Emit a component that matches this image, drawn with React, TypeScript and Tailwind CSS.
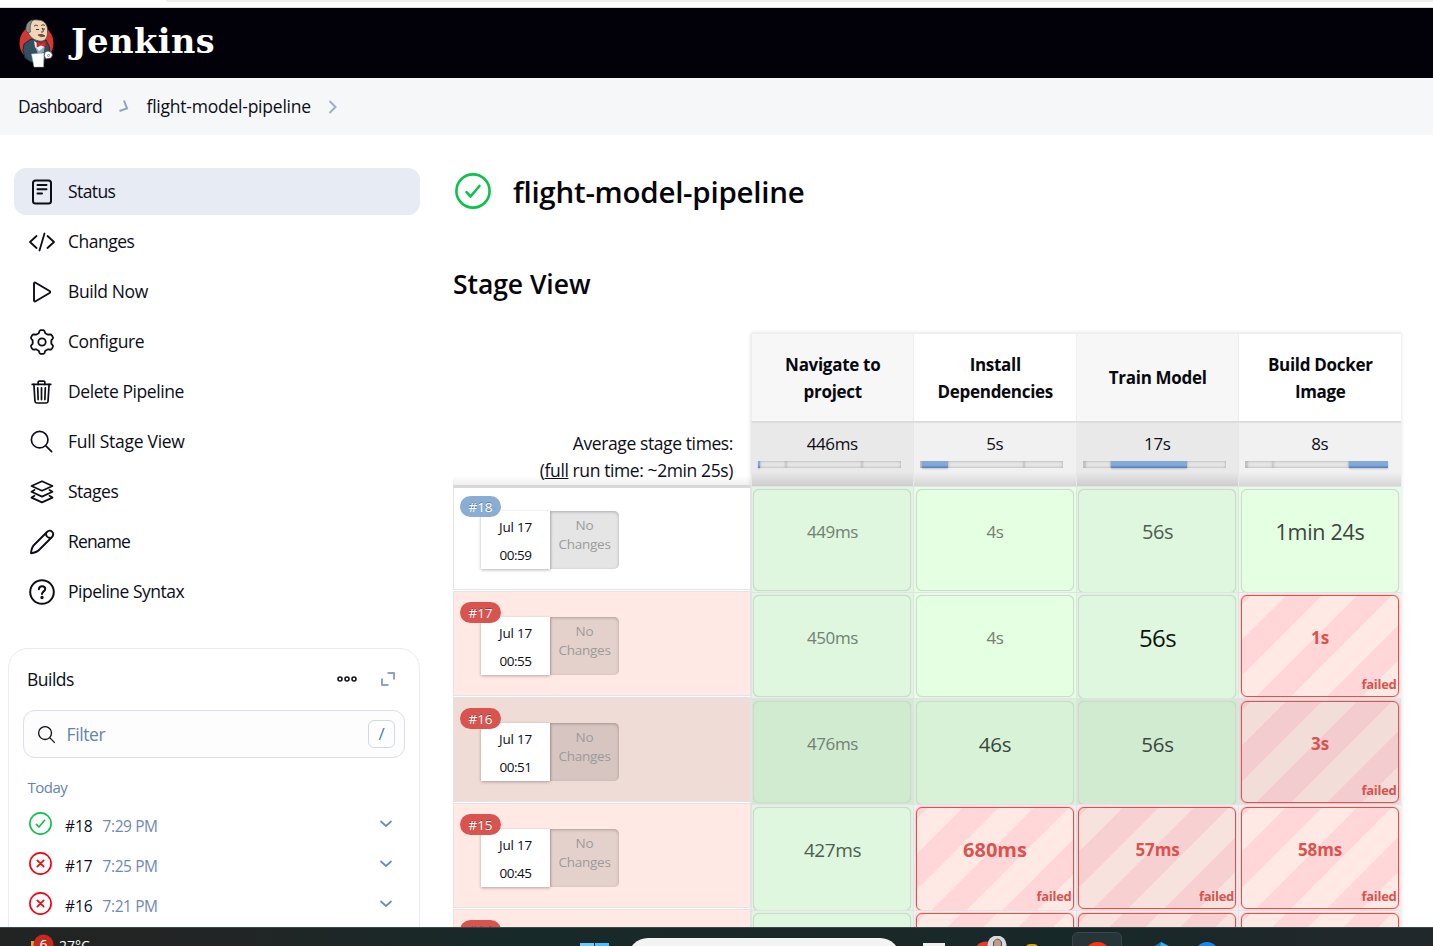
import type { ReactNode } from "react";
import { IoSearchOutline, IoTrashOutline } from "react-icons/io5";

function JenkinsLogo() {
  return (
    <svg width="38" height="52" viewBox="0 0 38 52">
      <ellipse cx="18.500" cy="26" rx="17" ry="18" fill="#d33833" />
      <path d="M6 27 L13 22 L28 23 L31 29 L32 36 L27 39 L26 44 L13 45 L7 41 L5 33 Z" fill="#335061" stroke="#1b2a33" strokeWidth="1" />
      <path d="M16 24 L21 27 L27 25 L26 33 L21 36 L17 30 Z" fill="#eef0f1" />
      <path d="M17 29 L21 34 L26 30 L26 35 L20 37 Z" fill="#81b0c4" />
      <path d="M9 13 C8 5 14 2 20 3 C27 3 30 9 29.500 14 C30 21 27 25 21 24 C15 23 11 19 9 13 Z" fill="#f0d6b7" stroke="#4d4d4d" strokeWidth="0.8" />
      <path d="M8 14 C7 7 11 3 15 3 C12 7 12 10 12.500 15 L10 16 Z" fill="#8c8c90" stroke="#333" strokeWidth="0.6" />
      <path d="M16 9 q2 -2 4 0 M23 8.500 q2 -1.500 4 0 M24 11 q2 2 1 4 l-2 0" stroke="#4a3529" fill="none" strokeWidth="0.9" />
      <path d="M18 12.500 h3 M24 12 h3" stroke="#222" strokeWidth="0.900" />
      <path d="M20 18 q4 -2 7 1 q-4 2 -7 -1" fill="#7c4a3d" stroke="#573d35" strokeWidth="0.7" />
      <path d="M19 24 L23 26.500 L28 24 L28 30 L23 28 L19 30 Z" fill="#e5242c" stroke="#8f1518" strokeWidth="0.6" />
      <path d="M13.500 37 L26 36 L25.500 50 L16 50 Z" fill="#fff" stroke="#aaa" strokeWidth="0.5" />
      <path d="M27 35 q3 -2 6 0 q3 3 0 6 l-5 1 q-3 -3 -1 -7 Z" fill="#fff" stroke="#333" strokeWidth="0.7" />
      <circle cx="30.500" cy="38.500" r="1" fill="none" stroke="#555" strokeWidth="0.6" />
    </svg>
  );
}

function Line({ children, size = 26, width = 2 }: { children: ReactNode; size?: number; width?: number }) {
  return (
    <svg
      width={size}
      height={size}
      viewBox="0 0 26 26"
      fill="none"
      stroke="currentColor"
      strokeWidth={width}
      strokeLinecap="round"
      strokeLinejoin="round"
    >
      {children}
    </svg>
  );
}

// Six-lobed gear outline, one lobe pointing straight up.
const gearPoints = Array.from({ length: 120 }, (_, i) => {
  const a = (i / 120) * Math.PI * 2;
  const r = 10.6 + 1.3 * Math.tanh(2.4 * Math.cos(6 * a));
  return `${(13 + r * Math.sin(a)).toFixed(2)},${(13 - r * Math.cos(a)).toFixed(2)}`;
}).join(" ");

const nav: { label: string; icon: ReactNode; track: string }[] = [
  {
    label: "Status",
    track: "tracking-[-0.6px]",
    icon: (
      <Line>
        <rect x="4" y="1.500" width="18" height="23" rx="2.500" />
        <path d="M8.500 6h9M8.500 10.300h9M8.500 14.500h4.500" />
      </Line>
    ),
  },
  {
    label: "Changes",
    track: "tracking-[-0.5px]",
    icon: (
      <Line width={1.8}>
        <path d="M7.500 7 1 13l6.500 6M18.500 7l6.500 6-6.500 6M15.500 4.500l-5 17" />
      </Line>
    ),
  },
  {
    label: "Build Now",
    track: "tracking-[-0.4px]",
    icon: (
      <Line width={1.9}>
        <path d="M5 4.600v16.800c0 .9.900 1.300 1.600.9l14-8.300c.8-.5.800-1.500 0-2L6.600 3.700C5.900 3.300 5 3.700 5 4.600z" />
      </Line>
    ),
  },
  {
    label: "Configure",
    track: "tracking-[-0.4px]",
    icon: (
      <Line width={1.8}>
        <polygon points={gearPoints} />
        <circle cx="13" cy="13" r="3.700" />
      </Line>
    ),
  },
  { label: "Delete Pipeline", track: "tracking-[-0.42px]", icon: <IoTrashOutline size={28} /> },
  { label: "Full Stage View", track: "tracking-[-0.28px]", icon: <IoSearchOutline size={29} /> },
  {
    label: "Stages",
    track: "tracking-[-0.5px]",
    icon: (
      <Line width={1.8}>
        <path d="M13 2.200 23.500 7 13 11.800 2.500 7z" />
        <path d="M5.500 11 2.500 12.800 13 17.600l10.500-4.800L20.500 11" />
        <path d="M5.500 16.800 2.500 18.600 13 23.400l10.500-4.800-3-1.800" />
      </Line>
    ),
  },
  {
    label: "Rename",
    track: "tracking-[-0.85px]",
    icon: (
      <Line width={1.9}>
        <path d="M2 24.200 C2.400 20 3.200 17.800 5 16 L18 3 C19.500 1.500 21.800 1.400 23.200 2.800 C24.600 4.200 24.500 6.500 23 8 L10 21 C8.200 22.800 6 23.600 2 24.200Z M17 4.500 C17 7 19 9 21.500 9" />
      </Line>
    ),
  },
  {
    label: "Pipeline Syntax",
    track: "tracking-[-0.5px]",
    icon: (
      <Line>
        <circle cx="13" cy="13" r="11.800" />
        <path d="M9.900 10.200c.1-2 1.500-3 3.200-3 1.800 0 3.100 1.100 3.100 2.700 0 2.400-3.200 2.500-3.200 5" />
        <circle cx="13" cy="18.500" r="0.700" fill="currentColor" />
      </Line>
    ),
  },
];

function StatusRing({ ok, size }: { ok: boolean; size: number }) {
  return (
    <svg width={size} height={size} viewBox="0 0 36 36" fill="none" stroke={ok ? "#0bc34a" : "#f6000f"} strokeWidth="2.600" strokeLinecap="round" strokeLinejoin="round">
      <circle cx="18" cy="18" r="16.600" />
      {ok ? <path d="M11.500 19.200l4 4.300 9-10.500" /> : <path d="M13 13l10 10M23 13L13 23" />}
    </svg>
  );
}

function Sidebar() {
  return (
    <aside className="w-[433px] shrink-0 pl-2 pt-[33px]">
      <nav className="flex w-[412px] flex-col gap-[3px] pl-1.5">
        {nav.map((n, i) => (
          <a
            key={n.label}
            className={`flex h-[47px] items-center rounded-[12px] pl-[14px] text-[17.500px] ${i === 0 ? "bg-[#e7ebf3]" : ""}`}
          >
            <span className="flex w-[27px] justify-center">{n.icon}</span>
            <span className={`ml-[13px] ${n.track}`}>{n.label}</span>
          </a>
        ))}
      </nav>
      <section className="mt-[33px] h-[320px] w-[412px] rounded-[20px] border border-[#eaecf3] px-[14px]">
        <div className="flex h-[61px] items-center pl-[4px] pr-[9px]">
          <h2 className="flex-1 text-[17.500px] tracking-[-0.5px]">Builds</h2>
          <svg className="-mt-[2px]" width="22" height="8" viewBox="0 0 22 8" fill="none" stroke="#14141f" strokeWidth="1.600">
            <circle cx="4" cy="4" r="2" />
            <circle cx="11" cy="4" r="2" />
            <circle cx="18" cy="4" r="2" />
          </svg>
          <svg className="-mt-[2px] ml-[22px]" width="16" height="16" viewBox="0 0 16 16" fill="none" stroke="#8ba3c7" strokeWidth="2" strokeLinejoin="round">
            <path d="M7.500 2H14v6.500M2 7.500V14h6.500" />
          </svg>
        </div>
        <div className="flex h-12 items-center rounded-[12px] border-[1.500px] border-[#d9dfeb] bg-[#fdfdfe] pl-3 pr-[9px]">
          <IoSearchOutline size={21} />
          <span className="ml-[9.500px] flex-1 text-[17.500px] tracking-[-0.400px] text-[#6483ae]">Filter</span>
          <kbd className="flex h-7 w-[27px] items-center justify-center rounded-[6px] border border-[#d0d9e8] font-['Open_Sans',sans-serif] text-[17px] text-[#5478a8]">/</kbd>
        </div>
        <p className="mt-[18px] pl-[4.500px] text-[15px] leading-[22px] tracking-[-0.500px] text-[#6483ae]">Today</p>
        {[
          ["#18", "7:29 PM"],
          ["#17", "7:25 PM"],
          ["#16", "7:21 PM"],
        ].map(([id, time], i) => (
          <div key={id} className={`flex h-10 items-center pl-[6px] pr-[12px] text-[15.500px] ${i === 0 ? "mt-[5px]" : ""}`}>
            <StatusRing ok={i === 0} size={23} />
            <span className="ml-[13px] mt-[7px] w-[37.500px] tracking-[-0.100px]">{id}</span>
            <span className="mt-[7px] flex-1 tracking-[-0.400px] text-[#7089b2]">{time}</span>
            <svg className="mt-px" width="14" height="8" viewBox="0 0 14 8" fill="none" stroke="#6b8ab8" strokeWidth="1.700" strokeLinecap="round" strokeLinejoin="round">
              <path d="M2 1.500l5 4.500 5-4.500" />
            </svg>
          </div>
        ))}
      </section>
    </aside>
  );
}

const segments = ["w-[2px]", "w-[26px]", "w-[76px]", "w-[39px]"];

const stages = [
  { name: "Navigate to project", avg: "446ms" },
  { name: "Install Dependencies", avg: "5s" },
  { name: "Train Model", avg: "17s" },
  { name: "Build Docker Image", avg: "8s" },
];

type Cell = { t: string; failed?: boolean; tone?: string; tall?: boolean };

const dim = "text-[17px] tracking-[-0.400px] text-[#738073]";
const mid = "text-[19px] tracking-[-0.400px] text-[#4f5d51]";
const big = "text-[21.500px] tracking-[-0.300px] text-[#3b463d]";
const red = "text-[17px] font-bold tracking-[-0.200px] text-[#d9534f]";

const runs: { id: string; time: string; cells: Cell[] }[] = [
  {
    id: "#18",
    time: "00:59",
    cells: [
      { t: "449ms", tone: dim },
      { t: "4s", tone: dim },
      { t: "56s", tone: "text-[20px] tracking-[-0.400px] text-[#4f5d51]", tall: true },
      { t: "1min 24s", tone: big, tall: true },
    ],
  },
  {
    id: "#17",
    time: "00:55",
    cells: [
      { t: "450ms", tone: dim },
      { t: "4s", tone: dim },
      { t: "56s", tone: "text-[24px] tracking-[-0.600px] text-[#0c120d]", tall: true },
      { t: "1s", failed: true },
    ],
  },
  {
    id: "#16",
    time: "00:51",
    cells: [
      { t: "476ms", tone: dim },
      { t: "46s", tone: "text-[20.500px] tracking-[-0.300px] text-[#3b463d]", tall: true },
      { t: "56s", tone: "text-[20.500px] tracking-[-0.300px] text-[#3b463d]", tall: true },
      { t: "3s", failed: true },
    ],
  },
  {
    id: "#15",
    time: "00:45",
    cells: [
      { t: "427ms", tone: mid, tall: true },
      { t: "680ms", failed: true, tone: "text-[20px] font-bold tracking-[0px] text-[#d9534f]", tall: true },
      { t: "57ms", failed: true },
      { t: "58ms", failed: true },
    ],
  },
];

function RunInfo({ id, time, index }: { id: string; time?: string; index: number }) {
  const bg = index === 0 ? "bg-white" : index === 2 ? "bg-[#f0dcd7]" : "bg-[#ffe9e4]";
  return (
    <div className={time ? "h-[106px] pb-px" : "h-[18px] overflow-hidden"}>
      <div
        className={`relative h-[105px] border border-[#e4e2e4] pl-[27px] ${bg} ${
          index === 0 ? "border-t-[3px] border-t-[#d8d8d8] pt-[23px]" : "pt-[25px]"
        }`}
      >
        <span
          className={`absolute left-[6px] flex h-[21px] w-[41px] items-center justify-center rounded-full pt-px text-[13.500px] tracking-[-0.100px] text-white [text-shadow:0_-1px_0_rgba(0,0,0,.3)] ${
            index === 0 ? "top-[8px] bg-[#8aadd4]" : "top-[10px] bg-[#d9534f]"
          }`}
        >
          {id}
        </span>
        {time && (
          <div className="flex h-[58px] text-center text-[13.500px]">
            <div className="w-[69px] bg-white pt-[2px] leading-[28px] tracking-[-0.200px] shadow-[0_1px_3px_rgba(0,0,0,.3)]">
              <div>Jul 17</div>
              <div className="tracking-[-0.500px]">{time}</div>
            </div>
            <div className="w-[69px] rounded-r-[5px] bg-black/10 pt-[5px] text-[13.500px] leading-[19px] tracking-[-0.250px] text-[#9b9b9b] shadow-[inset_0_1px_3px_rgba(0,0,0,.25)]">
              No
              <br />
              Changes
            </div>
          </div>
        )}
      </div>
    </div>
  );
}

function StageCell({ cell, dark, odd }: { cell: Cell; dark: boolean; odd: boolean }) {
  const green = dark ? (odd ? "bg-[#d1ebd1]" : "bg-[#d8f2d8]") : odd ? "bg-[#def7de]" : "bg-[#e4ffe2]";
  const stripes = dark
    ? "bg-[repeating-linear-gradient(-45deg,#f2ddd9_0_25px,#f3cccf_25px_50px)]"
    : odd
      ? "bg-[repeating-linear-gradient(-45deg,#f8e2dd_0_25px,#f7d0d2_25px_50px)]"
      : "bg-[repeating-linear-gradient(-45deg,#ffe9e4_0_25px,#ffd7d9_25px_50px)]";
  const outer = cell.failed ? (dark ? "bg-[#eadfdf]" : "bg-[#f6eeee]") : green;
  return (
    <div className={`h-[106px] border-l border-t border-[#e3e1e5] pl-[1.500px] pr-[2px] pt-[2px] ${outer}`}>
      <div
        className={`flex w-[158px] flex-col rounded-[6px] border text-center ${cell.tall ? "h-[103.500px]" : "h-[102px]"} ${
          cell.failed
            ? `border-[1.500px] border-[#d9534f] shadow-[0_0_2px_rgba(217,83,79,.6)] ${stripes}`
            : `border-[#cfd8d1] shadow-[0_0_1px_rgba(0,0,0,.15)] ${green}`
        }`}
      >
        <div className={`mt-[28px] pl-px leading-[28px] ${cell.tone ?? red}`}>{cell.t}</div>
        {cell.failed && cell.t && (
          <div className={`mt-auto pr-[1px] text-right text-[13px] font-bold leading-[18px] tracking-[-0.300px] text-[#d9534f] ${cell.tall ? "pb-[5px]" : "pb-[3px]"}`}>
            failed
          </div>
        )}
      </div>
    </div>
  );
}

const clipped: Cell[] = [{ t: "" }, { t: "", failed: true }, { t: "", failed: true }, { t: "", failed: true }];

function StageBoard() {
  return (
    <div className="mt-[33px] flex">
      <div className="w-[297.500px]">
        <div className="flex h-[152px] flex-col justify-end bg-linear-to-t from-[#efefef] to-white to-[9px] pb-px pr-[17.500px] text-right text-[17.500px] leading-[27px] tracking-[-0.400px]">
          <div>Average stage times:</div>
          <div>
            (<span className="underline">full</span> run time: ~2min 25s)
          </div>
        </div>
        {runs.map((r, i) => (
          <RunInfo key={r.id} id={r.id} time={r.time} index={i} />
        ))}
        <RunInfo id="#14" index={4} />
      </div>
      <div className="w-[650px] border-r border-[#ececf0] shadow-[0_0_4px_rgba(0,0,0,.14)]">
        <div className="grid w-[650px] grid-cols-4">
          {stages.map((s, c) => (
            <div
              key={s.name}
              className={`flex h-[88px] items-center justify-center border-l border-t border-[#eeeeef] pl-[19.500px] pr-[18.500px] text-center text-[17px] font-bold leading-[27px] tracking-[-0.300px] text-[#08080f] ${c % 2 ? "bg-white" : "bg-[#f7f7f7]"}`}
            >
              {s.name}
            </div>
          ))}
          {stages.map((s, c) => (
            <div
              key={s.avg}
              className={`h-[65px] border-l border-t-2 border-l-[#e8e8ea] border-t-[#dddddd] pl-[6px] ${
                c % 2
                  ? "bg-linear-to-t from-[#d5d5d5] via-[#f1f1f1] via-[14px] to-[#f1f1f1]"
                  : "bg-linear-to-t from-[#cdcdcd] via-[#e9e9e9] via-[14px] to-[#e9e9e9]"
              }`}
            >
              <div className="pr-[6px] pt-[7px] text-center text-[17px] leading-7 tracking-[-0.400px]">{s.avg}</div>
              <div className="mt-[3px] flex h-[7px] w-[143px]">
                {segments.map((w, k) => (
                  <span
                    key={w}
                    className={`${w} ${
                      k === c
                        ? "bg-linear-to-b from-[#84aad3] from-60% to-[#4a7bd0] shadow-[0_1px_2px_rgba(0,0,0,.2)]"
                        : "bg-[#e6e6e6] shadow-[inset_0_0_3px_rgba(0,0,0,.3)]"
                    }`}
                  />
                ))}
              </div>
            </div>
          ))}
          {runs.map((r, i) =>
            r.cells.map((cell, c) => <StageCell key={`${r.id}-${c}`} cell={cell} dark={i === 2} odd={c % 2 === 0} />),
          )}
          {clipped.map((cell, c) => (
            <StageCell key={c} cell={cell} dark={false} odd={c % 2 === 0} />
          ))}
        </div>
      </div>
    </div>
  );
}

function Taskbar() {
  return (
    <footer className="flex h-[19px] shrink-0 items-start overflow-hidden border-t border-[#3c4747] bg-[linear-gradient(90deg,#222423_0%,#222525_16%,#172929_35%,#1c2828_55%,#172828_75%,#21282b_95%)] text-white">
      <svg className="ml-[30px] mt-[6px] shrink-0" width="24" height="20" viewBox="0 0 24 20">
        <rect x="1" y="7" width="5" height="12" fill="#e0a63a" />
        <circle cx="13.500" cy="10.500" r="10" fill="#c42b1f" />
        <text x="13.500" y="15.500" fontSize="14" textAnchor="middle" fill="#fff" fontFamily="Open Sans">6</text>
      </svg>
      <span className="ml-[5px] mt-[7px] w-[33px] text-[14px] leading-[22px] tracking-[0px]">27°C</span>
      <svg className="ml-[488px] mt-[15px] shrink-0" width="29" height="5">
        <rect width="14" height="5" fill="#6cccf7" />
        <rect x="15" width="14" height="5" fill="#46c3f8" />
      </svg>
      <div className="ml-[19px] mt-[10px] h-10 w-[272px] shrink-0 rounded-[20px] bg-[#f2f3f3]" />
      <div className="ml-[23px] mt-[15px] h-5 w-[22px] shrink-0 bg-[#eef0f0]" />
      <svg className="ml-[28px] mt-[8px] shrink-0" width="36" height="12" viewBox="0 0 36 12">
        <circle cx="13" cy="18" r="12.500" fill="#df3d30" />
        <circle cx="24" cy="9" r="9.500" fill="#d5dbdc" />
        <path d="M20 12V6q5-7 9 0v6z" fill="#4e555d" />
        <ellipse cx="24.500" cy="8" rx="3.500" ry="4.500" fill="#c39a88" />
      </svg>
      <div className="ml-[17px] mt-[16px] h-5 w-[12px] shrink-0 rounded-t-sm bg-[#d9a20b]" />
      <div className="ml-[34px] mt-[4px] flex h-10 w-[50px] shrink-0 justify-center rounded-md border border-[#37474a] bg-[#263638] pt-[9px]">
        <div className="h-6 w-[25px] rounded-full bg-[#fb3417]" />
      </div>
      <svg className="ml-[31px] mt-[14px] shrink-0" width="16" height="5" viewBox="0 0 16 5">
        <path d="M0 5 8 0l3 2v3z" fill="#1678b8" />
        <path d="M8 0l8 4v1H7z" fill="#31b1f0" />
      </svg>
      <div className="ml-[26px] mt-[14px] size-6 shrink-0 rounded-full bg-[#1c85e8]" />
    </footer>
  );
}

export default function App() {
  return (
    <div className="flex h-[946px] w-[1433px] flex-col overflow-hidden bg-white font-['Open_Sans','Noto_Sans',sans-serif] text-[#0d0d16]">
      <div className="flex h-2 shrink-0 flex-col justify-between border-b border-[#dddde3] pl-[166px]">
        <div className="h-[2px] rounded-bl-full bg-[#eeeef3]" />
      </div>
      <header className="flex h-[70px] shrink-0 items-center bg-[#020109] pl-[18px]">
        <JenkinsLogo />
        <span className="-mt-px ml-[15px] font-['DejaVu_Serif',serif] text-[33.500px] font-bold tracking-[0.500px] text-white">Jenkins</span>
      </header>
      <div className="flex h-[57px] shrink-0 items-center bg-[#f6f7f9] pl-[18px] text-[17.500px]">
        <span className="w-[84px] tracking-[-0.700px]">Dashboard</span>
        <svg className="ml-[15.500px]" width="12" height="16" viewBox="0 0 12 16" fill="none" stroke="#8ba3c7" strokeWidth="2">
          <path d="M6 1.500l3 8-7.500 2.500" />
        </svg>
        <span className="ml-[17px] w-[166px] tracking-[-0.230px]">flight-model-pipeline</span>
        <svg className="ml-[15.500px]" width="10" height="16" viewBox="0 0 10 16" fill="none" stroke="#9bb0d0" strokeWidth="2">
          <path d="M1.500 2l6 6-6 6" />
        </svg>
      </div>
      <div className="flex min-h-0 flex-1 overflow-hidden">
        <Sidebar />
        <main className="w-[1000px] shrink-0 pl-5 pt-[33px]">
          <h1 className="flex h-[47px] items-center pl-[2px] text-[29.500px] font-semibold tracking-[-0.250px] text-[#05050c]">
            <span className="-mt-[2px]">
              <StatusRing ok size={36} />
            </span>
            <span className="ml-[22px] mt-[2px]">flight-model-pipeline</span>
          </h1>
          <h2 className="mt-[50px] h-[35px] text-[26.500px] font-semibold leading-[38px] tracking-[-0.060px] text-[#05050c]">Stage View</h2>
          <StageBoard />
        </main>
      </div>
      <Taskbar />
    </div>
  );
}
